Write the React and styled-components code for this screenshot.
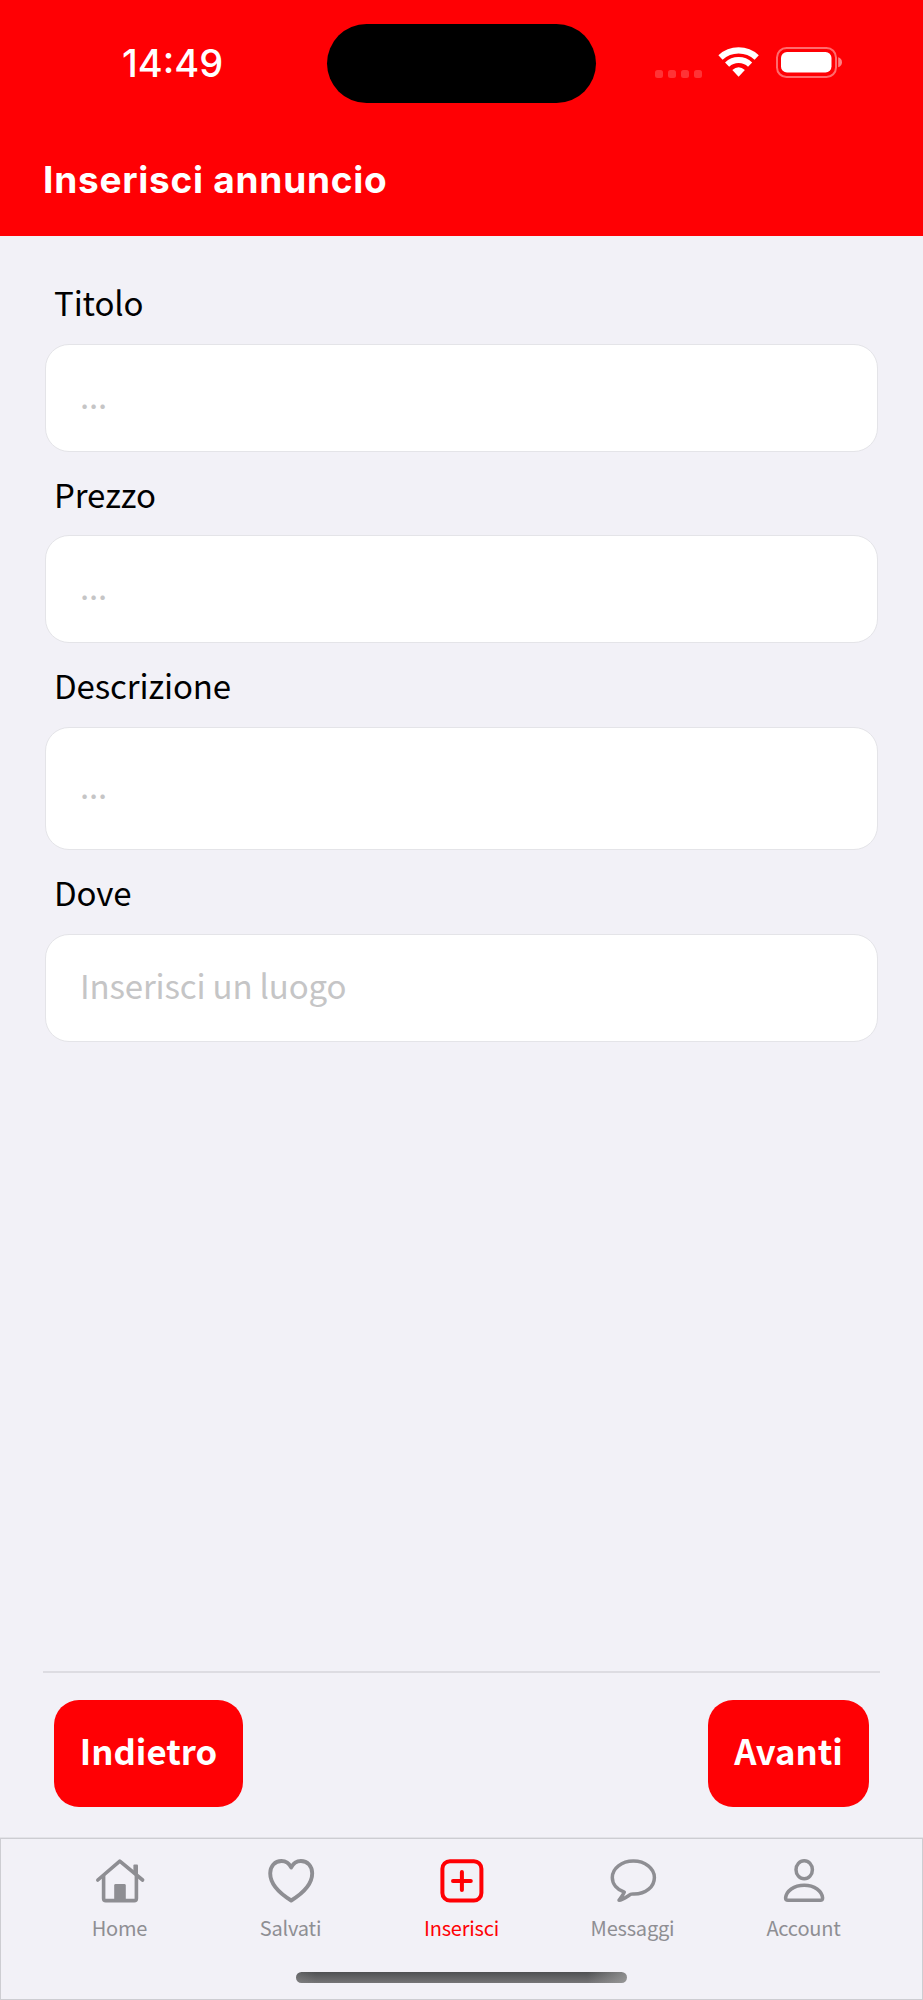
import React from "react";
import styled, { createGlobalStyle } from "styled-components";

const RED = "#ff0004";
const GREY = "#8e8e93";
const SURFACE = "#f2f1f7";
const BODY_FONT = '"Noto Sans CJK SC", "Noto Sans", sans-serif';
const UI_FONT = 'Inter, "Liberation Sans", sans-serif';

const GlobalStyle = createGlobalStyle`
  *, *::before, *::after { box-sizing: border-box; }
  body { margin: 0; background: ${SURFACE}; }
`;

const Screen = styled.div`
  display: flex;
  flex-direction: column;
  width: 923px;
  height: 2000px;
  overflow: hidden;
  background: ${SURFACE};
  font-family: ${BODY_FONT};
`;

const Header = styled.header`
  height: 236px;
  flex: none;
  background: ${RED};
  color: #fff;
  font-family: ${UI_FONT};
`;

const StatusBar = styled.div`
  display: grid;
  grid-template-columns: 327px 269px 1fr;
  align-items: center;
  height: 127px;
`;

const Time = styled.span`
  padding: 0 0 2px 122px;
  font-size: 38px;
  font-weight: 550;
  line-height: 46px;
`;

const Island = styled.div`
  height: 79px;
  border-radius: 40px;
  background: #000;
`;

const StatusIcons = styled.div`
  display: flex;
  align-items: flex-end;
  height: 31px;
  margin: 0 0 3px 59px;
`;

const SignalDots = styled.div`
  display: flex;
  gap: 5px;
  margin-right: 16px;
`;

const SignalDot = styled.i`
  width: 8px;
  height: 8px;
  border-radius: 2.5px;
  background: rgba(255, 255, 255, 0.2);
`;

const WifiSvg = styled.svg`
  width: 42px;
  height: 31px;
  margin-right: 16px;
`;

const BatterySvg = styled.svg`
  width: 67px;
  height: 31px;
`;

const Title = styled.h1`
  margin: 33px 0 0 43px;
  font-size: 37px;
  font-weight: 700;
  line-height: 40px;
  letter-spacing: 0.75px;
`;

const Form = styled.main`
  display: flex;
  flex-direction: column;
  gap: 18px;
  flex: 1;
  padding: 42px 45px 0;
`;

const Field = styled.label`
  display: flex;
  flex-direction: column;
  gap: 17.6px;
`;

const FieldLabel = styled.span`
  padding-left: 9px;
  font-size: 33px;
  line-height: 48px;
  letter-spacing: -0.12px;
  color: #000;
`;

const TextInput = styled.input`
  width: 100%;
  height: ${(p) => p.$height}px;
  padding: 0 33px 6px 34px;
  border: 1px solid #e4e4e8;
  border-radius: 24px;
  background: #fff;
  outline: none;
  font-family: inherit;
  font-size: 33px;
  letter-spacing: -0.16px;

  &::placeholder {
    color: #c5c5c6;
    opacity: 1;
  }
`;

const Actions = styled.div`
  display: flex;
  justify-content: space-between;
  flex: none;
  height: 167px;
  margin: 0 43px;
  padding: 27px 11px 0;
  border-top: 2px solid #dddce2;
`;

const ActionButton = styled.button`
  width: ${(p) => p.$width}px;
  height: 107px;
  padding: 0 0 7px;
  border: 0;
  border-radius: 25px;
  background: ${RED};
  color: #fff;
  font-family: inherit;
  font-size: 34.7px;
  font-weight: 700;
`;

const BottomBar = styled.footer`
  display: flex;
  flex-direction: column;
  align-items: center;
  flex: none;
  height: 162px;
  padding-top: 17px;
  border: 1px solid #cdcdd2;
  box-shadow: 0 -1px #e3e3e8;
`;

const Tabs = styled.nav`
  display: grid;
  grid-template-columns: repeat(5, 171px);
`;

const Tab = styled.a`
  display: flex;
  flex-direction: column;
  align-items: center;
  gap: 9px;
  color: ${(p) => (p.$active ? RED : GREY)};
`;

const TabIcon = styled.svg`
  width: 52px;
  height: 48px;
  fill: none;
  stroke: currentColor;
  stroke-width: ${(p) => p.$stroke}px;
  stroke-linecap: round;
  stroke-linejoin: round;
`;

const TabLabel = styled.span`
  font-size: 20px;
  line-height: 30px;
  letter-spacing: -0.2px;
`;

const HomeIndicator = styled.div`
  width: 331px;
  height: 11px;
  margin-top: 29px;
  border-radius: 6px;
  background:
    linear-gradient(90deg, rgba(160, 160, 160, 0.25), transparent 6%, transparent 88%, rgba(175, 175, 175, 0.6)),
    linear-gradient(#4f5052, #757577);
`;

const fields = [
  { label: "Titolo", placeholder: "...", height: 108 },
  { label: "Prezzo", placeholder: "...", height: 108 },
  { label: "Descrizione", placeholder: "...", height: 123.4 },
  { label: "Dove", placeholder: "Inserisci un luogo", height: 108 },
];

const tabs = [
  {
    label: "Home",
    stroke: 3.6,
    icon: (
      <>
        <path d="M3.8 24 25.8 5.2 48.6 24" />
        <path d="M9.6 20v22.4q0 2.200 2.200 2.200h28.400q2.200 0 2.200-2.200V20" />
        <path d="M39.400 16V9.400q0-1 1-1h2.600q1 0 1 1V20z" fill="currentColor" stroke="none" />
        <path d="M20.200 45V29.400q0-1.400 1.400-1.400h8.800q1.400 0 1.400 1.400V45z" fill="currentColor" stroke="none" />
      </>
    ),
  },
  {
    label: "Salvati",
    stroke: 3.9,
    icon: (
      <path d="M26.2 11.5C24.2 7.4 20.6 5 16.5 5 9.8 5 5.2 10.2 5.2 17.3c0 9.900 8.600 19.600 21 27.200 12.400-7.600 21-17.300 21-27.200C47.200 10.200 42.600 5 35.900 5c-4.100 0-7.700 2.400-9.700 6.500Z" />
    ),
  },
  {
    label: "Inserisci",
    stroke: 4,
    active: true,
    icon: (
      <>
        <rect x="6.4" y="5.2" width="39" height="39.4" rx="7.5" />
        <path d="M17 25h17.800M25.900 16.100v17.800" />
      </>
    ),
  },
  {
    label: "Messaggi",
    stroke: 3.5,
    icon: (
      <path d="M17.300 36.200C10 33.500 5.300 28 5.300 21.500 5.300 12.300 14.700 5 26.400 5s21 7.300 21 16.500S39 38 27 38c-1.500 0-2.500-.1-3.200.3-3.800 2.200-7.500 5.700-11.800 5.900 2-2.700 4.200-5.200 5.300-8Z" />
    ),
  },
  {
    label: "Account",
    stroke: 3.5,
    icon: (
      <>
        <ellipse cx="26.2" cy="13.8" rx="8.2" ry="9" />
        <path d="M10 44.300h32.400q2.200 0 2.200-2.300c-.6-7-8.100-12.800-18.400-12.800S8.200 35 7.600 42q0 2.300 2.400 2.300Z" />
      </>
    ),
  },
];

const WifiIcon = () => (
  <WifiSvg viewBox="0 0 42 31">
    <path d="M2.5 10.5A26.6 26.6 0 0 1 38.7 10.5" fill="none" stroke="#fff" strokeWidth="6.2" />
    <path d="M9.1 17.6A16.8 16.8 0 0 1 32.1 17.6" fill="none" stroke="#fff" strokeWidth="6" />
    <path d="M14.3 22.9Q20.6 17.6 26.9 22.9L20.6 29.8Z" fill="#fff" />
  </WifiSvg>
);

const BatteryIcon = () => (
  <BatterySvg viewBox="0 0 67 31">
    <rect x="1" y="1" width="59" height="29" rx="9.5" fill="none" stroke="#fff" strokeOpacity=".42" strokeWidth="2" />
    <rect x="5" y="5" width="50.5" height="20.6" rx="6" fill="#fff" />
    <path d="M62.2 10.2Q66 11.5 66 15.2T62.2 20.2Z" fill="#fff" fillOpacity=".5" />
  </BatterySvg>
);

export default function App() {
  return (
    <Screen>
      <GlobalStyle />
      <Header>
        <StatusBar>
          <Time>14:49</Time>
          <Island />
          <StatusIcons>
            <SignalDots>
              {[0, 1, 2, 3].map((n) => (
                <SignalDot key={n} />
              ))}
            </SignalDots>
            <WifiIcon />
            <BatteryIcon />
          </StatusIcons>
        </StatusBar>
        <Title>Inserisci annuncio</Title>
      </Header>

      <Form>
        {fields.map((f) => (
          <Field key={f.label}>
            <FieldLabel>{f.label}</FieldLabel>
            <TextInput placeholder={f.placeholder} $height={f.height} />
          </Field>
        ))}
      </Form>

      <Actions>
        <ActionButton $width={189}>Indietro</ActionButton>
        <ActionButton $width={161}>Avanti</ActionButton>
      </Actions>

      <BottomBar>
        <Tabs>
          {tabs.map((t) => (
            <Tab key={t.label} $active={t.active}>
              <TabIcon viewBox="0 0 52 48" $stroke={t.stroke}>
                {t.icon}
              </TabIcon>
              <TabLabel>{t.label}</TabLabel>
            </Tab>
          ))}
        </Tabs>
        <HomeIndicator />
      </BottomBar>
    </Screen>
  );
}
